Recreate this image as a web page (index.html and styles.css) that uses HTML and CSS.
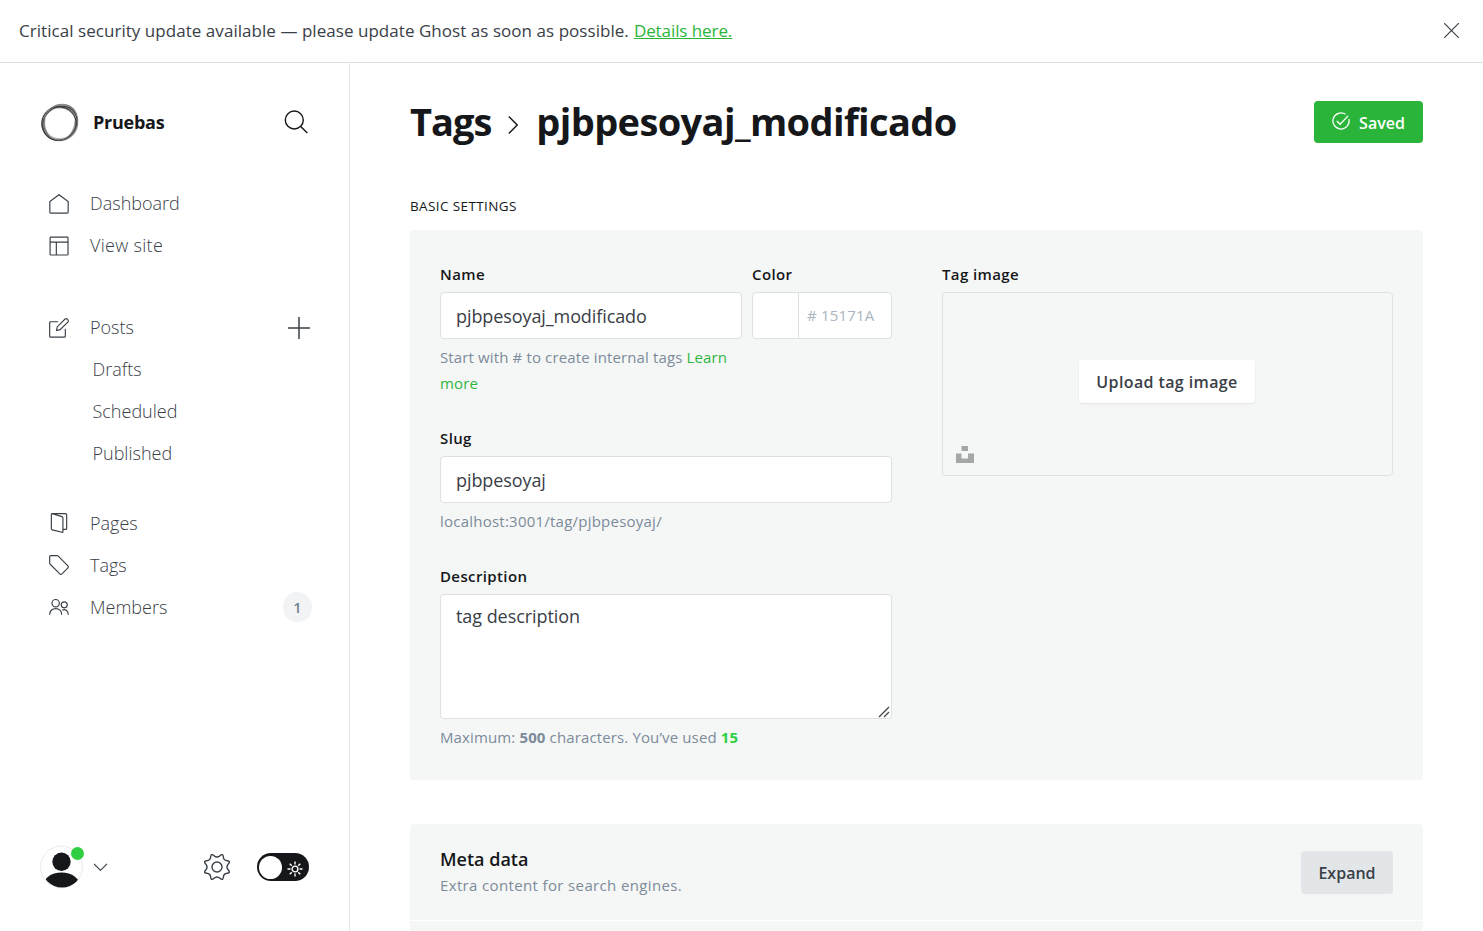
FILE: index.html
```html
<!DOCTYPE html>
<html lang="en">
<head>
<meta charset="utf-8">
<title>Tags - Pruebas</title>
<link rel="stylesheet" href="styles.css">
</head>
<body>
<div class="app">
  <div class="banner">
    <p class="banner-text"><span class="banner-copy">Critical security update available — please update Ghost as soon as possible.</span><a class="banner-link">Details here.</a></p>
    <svg class="close" width="16" height="16" viewBox="0 0 16 16"><path d="M.2.2l14.600 14.600M14.800.2L.2 14.800"/></svg>
  </div>
  <div class="body">
    <aside class="sidebar">
      <header class="site">
        <svg class="site-logo" width="40" height="40" viewBox="0 0 40 40">
          <ellipse cx="19.700" cy="20.300" rx="17" ry="16.400" stroke="#777" stroke-width="3.200" opacity=".5"/>
          <path d="M14.500 3.200C23-1 34 1.500 37.200 12.500L35 13C31 6.500 24 4.200 14.500 5.200zM36.500 13c4 10-1.500 20.500-12 23.500 6-4.500 9.500-11 10-18zM3 15.500C.5 25 5 33 13.500 36.500 7 31 4 24 5.500 15z" fill="#777" opacity=".75"/>
          <ellipse cx="19" cy="20.600" rx="17.200" ry="16.800" stroke="#2c2c2c" stroke-width="1"/>
          <ellipse cx="19.900" cy="20.200" rx="18.200" ry="15.900" transform="rotate(-42 19.900 20.200)" stroke="#3a3a3a" stroke-width="1"/>
          <ellipse cx="20.700" cy="19.100" rx="18.300" ry="16.600" transform="rotate(-60 20.700 19.100)" stroke="#777" stroke-width=".9"/>
        </svg>
        <span class="site-name">Pruebas</span>
        <svg class="search" width="24" height="24" viewBox="0 0 24 24"><circle cx="10.300" cy="10" r="9"/><path d="M16.700 16.400l6.600 6.600"/></svg>
      </header>
      <nav class="nav">
        <ul class="group">
          <li class="item"><svg class="icon" viewBox="0 0 24 24"><path d="M1 9v12.500q0 1.500 1.500 1.500h19q1.500 0 1.500-1.500V9L12 .8z"/></svg><span>Dashboard</span></li>
          <li class="item"><svg class="icon" viewBox="0 0 24 24"><rect x="1.300" y="1.300" width="21.500" height="21.500" rx="1"/><path d="M1.300 7.400h21.500M8.800 7.400v15.400"/></svg><span class="view-site">View site</span></li>
        </ul>
        <ul class="group">
          <li class="item"><svg class="icon" viewBox="0 0 24 24"><path d="M11 4.500H2q-1.200 0-1.200 1.200v16.100q0 1.200 1.200 1.200h16.400q1.200 0 1.200-1.200V13M9 15l.8-4.300L19.300 1.200q1.500-1 3 .4t.5 3L13.300 14z"/></svg><span>Posts</span>
            <svg class="plus" width="22" height="22" viewBox="0 0 22 22"><path d="M11 0v22M0 11h22"/></svg></li>
          <li class="item sub"><span>Drafts</span></li>
          <li class="item sub"><span>Scheduled</span></li>
          <li class="item sub"><span>Published</span></li>
        </ul>
        <ul class="group group-last">
          <li class="item"><svg class="icon" viewBox="0 0 24 24"><path d="M4 .8l11.500 3.500q1.200.4 1.200 1.600v16.300q0 1.200-1.200.9L4 20.300q-1.200-.4-1.200-1.600V1.700Q2.800.8 4 .8h16q1.200 0 1.200 1.200v16.500q0 1.200-1.200 1.200h-3.200"/></svg><span>Pages</span></li>
          <li class="item"><svg class="icon" viewBox="0 0 24 24"><path d="M.8 2v7.700q0 .8.600 1.400L13 22.700q1.300 1 2.500 0l7.200-7.200q1-1.300 0-2.500L11.100 1.400Q10.500.8 9.700.8H2Q.8.800.8 2z"/></svg><span>Tags</span></li>
          <li class="item"><svg class="icon" viewBox="0 0 24 24"><circle cx="8" cy="7.400" r="4.400"/><circle cx="18.300" cy="9.400" r="3.600"/><path d="M.8 21.200c0-4.500 3-7.300 7.200-7.300s7.200 2.800 7.200 7.300M16 15.700c3.800-1.500 7.200.8 7.200 5.500"/></svg><span>Members</span><span class="count">1</span></li>
        </ul>
      </nav>
      <footer class="foot">
        <div class="avatar">
          <svg width="44" height="44" viewBox="0 0 44 44"><defs><clipPath id="face"><circle cx="22" cy="22" r="20.500"/></clipPath></defs><circle cx="21.500" cy="22" r="20.900" fill="#fff" stroke="#e8ebee"/><g clip-path="url(#face)" fill="#15171a"><circle cx="21.500" cy="16.700" r="9.200"/><ellipse cx="21.500" cy="42" rx="19" ry="14.600"/></g></svg>
          <span class="online"></span>
        </div>
        <svg class="caret" width="14" height="8" viewBox="0 0 14 8"><path d="M0 .800L6.500 7.300l6.500-6.500"/></svg>
        <svg class="gear" width="26" height="26" viewBox="-13 -13 26 26"><circle r="5"/><path d="M-3-11.300Q0-8.600 3-11.300Q6-14 6.300-10.300Q6.600-6.600 10.300-6.300Q14-6 11.300-3Q8.600 0 11.300 3Q14 6 10.300 6.300Q6.600 6.600 6.300 10.300Q6 14 3 11.300Q0 8.600-3 11.300Q-6 14-6.300 10.300Q-6.600 6.600-10.300 6.300Q-14 6-11.300 3Q-8.600 0-11.300-3Q-14-6-10.300-6.300Q-6.600-6.600-6.300-10.300Q-6-14-3-11.300z"/></svg>
        <div class="toggle"><span class="knob"></span><svg width="16" height="16" viewBox="0 0 16 16"><circle cx="8" cy="8" r="2.900"/><path d="M8 .5v3M8 12.500v3M.5 8h3M12.500 8h3M2.700 2.700l2.100 2.100M11.200 11.200l2.100 2.100M13.300 2.700l-2.100 2.100M4.800 11.200l-2.100 2.100"/></svg></div>
      </footer>
    </aside>
    <main class="main">
      <header class="heading">
        <h1 class="title"><span class="crumb">Tags</span><svg class="chev" width="10" height="18" viewBox="0 0 10 18"><path d="M.8.500L9.200 9 .8 17.500"/></svg><span class="current">pjbpesoyaj_modificado</span></h1>
        <button class="btn saved"><svg width="18" height="18" viewBox="0 0 18 18"><path d="M16.900 7.200A8.100 8.100 0 1 1 13.600 2.300M4.800 9l3.300 3.300 8-8.400"/></svg><span>Saved</span></button>
      </header>
      <h4 class="section-title">BASIC SETTINGS</h4>
      <section class="card">
        <div class="col">
          <div class="pair">
            <div class="field"><label>Name</label><div class="input"><span>pjbpesoyaj_modificado</span></div>
              <p class="help">Start with # to create internal tags <a class="learn">Learn<br>more</a></p></div>
            <div class="field"><label>Color</label><div class="input color"><span class="swatch"></span><span class="hex"># 15171A</span></div></div>
          </div>
          <div class="field slug"><label>Slug</label><div class="input"><span>pjbpesoyaj</span></div><p class="help url">localhost:3001/tag/pjbpesoyaj/</p></div>
          <div class="field"><label>Description</label>
            <div class="area-wrap"><textarea class="area">tag description</textarea><svg class="grip" width="12" height="12" viewBox="0 0 12 12"><path d="M1 11L11 1M6 11l5-5"/></svg></div>
            <p class="help">Maximum: <b>500</b> characters. You’ve used <b class="used">15</b></p></div>
        </div>
        <div class="col">
          <div class="field"><label>Tag image</label>
            <div class="uploader"><button class="btn upload">Upload tag image</button>
              <svg class="unsplash" width="18" height="17" viewBox="0 0 18 17"><path d="M5.500 0h6.500v5H5.500zM0 7.500h5.500v5H12v-5h6V17H0z"/></svg></div></div>
        </div>
      </section>
      <section class="meta">
        <div class="meta-row"><div><h4 class="meta-title">Meta data</h4><p class="meta-sub">Extra content for search engines.</p></div><button class="btn expand">Expand</button></div>
      </section>
    </main>
  </div>
</div>
</body>
</html>
```
FILE: styles.css
```css
*{box-sizing:border-box}
body{margin:0;background:#fff;color:#15171a;font-family:"Open Sans","Noto Sans",sans-serif;font-size:17px}
p,h1,h4,ul{margin:0;padding:0;font-weight:400}
ul{list-style:none}
svg{display:block;flex:none;fill:none}
span,label{white-space:nowrap}
.app{display:flex;flex-direction:column;height:931px;overflow:hidden}
.banner{display:flex;align-items:center;justify-content:space-between;flex:none;height:63px;padding:0 23px 0 19px;border-bottom:1px solid #dddfe2;color:#394047}
.banner-text{display:flex;gap:5px;line-height:26px}
.banner-copy{letter-spacing:.045px}
.banner-link{letter-spacing:-.08px;color:#2ab53a;text-decoration:underline}
.close{stroke:#394047;stroke-width:1.200}
.body{display:flex;flex:1;min-height:0}
.sidebar{display:flex;flex-direction:column;width:350px;flex:none;border-right:1px solid #e3e5e8;color:#394047}
.site{display:flex;align-items:center;height:40px;margin:40px 41px 0 40px}
.site-name{margin-left:13px;padding-bottom:2px;color:#15171a;font-weight:700;font-size:18px;letter-spacing:-.25px}
.search{margin-left:auto;margin-bottom:3px;stroke:#15171a;stroke-width:1.400}
.nav{display:flex;flex-direction:column;margin-top:40px}
.group{display:flex;flex-direction:column;margin-bottom:40px}
.group-last{margin-top:-13px}
.item{display:flex;align-items:center;height:42px;padding:0 37px 0 49px;font-weight:300;font-size:18px}
.item>span{padding-bottom:2px}
.group-last .item>span{padding-bottom:0}
.view-site{letter-spacing:.3px}
.item.sub{padding-left:92.500px}
.icon{width:20px;height:20px;margin-right:21px;stroke:#394047;stroke-width:1.400}
.plus{margin:0 2px 0 auto;stroke:#394047;stroke-width:1.500}
.count{display:grid;place-items:center;width:29px;height:30px;margin-left:auto;border-radius:15px;background:#f1f3f4;color:#738291;font-size:14.500px;font-weight:600}
.foot{display:flex;align-items:center;height:44px;margin:auto 40px 42px}
.avatar{position:relative}
.online{position:absolute;left:31px;top:2px;width:13px;height:13px;border-radius:50%;background:#30cf43}
.caret{margin:0 0 0 10px;stroke:#394047;stroke-width:1.200}
.gear{margin:0 0 0 95.500px;stroke:#394047;stroke-width:1.400}
.toggle{display:flex;align-items:center;width:52px;height:28px;margin-left:auto;padding:0 6.500px 0 2px;border-radius:14px;background:#15171a}
.toggle svg{margin-left:auto;margin-top:3px;stroke:#fff;stroke-width:1.400}
.knob{width:23px;height:23px;border-radius:50%;background:#fff}
.main{display:flex;flex-direction:column;flex:1;padding:38px 60px 0}
.heading{display:flex;align-items:center;justify-content:space-between;height:42px}
.title{display:flex;align-items:center;padding-bottom:2px;font-weight:700;font-size:38px;line-height:42px}
.crumb{letter-spacing:-1px}
.current{letter-spacing:-.620px}
.chev{margin:8px 18px 0 17px;stroke:#15171a;stroke-width:1.400}
.btn{display:flex;align-items:center;justify-content:center;flex:none;padding:0;border:0;border-radius:4px;font:600 16px "Open Sans",sans-serif;color:#394047}
.saved{width:109px;height:42px;gap:9px;background:#2ab53a;color:#fff}
.saved span{padding-top:1px}
.saved svg{margin-top:-2px;stroke:#fff;stroke-width:1.300}
.section-title{margin-top:51px;height:24px;line-height:24px;font-size:13.500px;font-weight:500;letter-spacing:.380px}
.card{display:grid;grid-template-columns:452px 451px;column-gap:50px;flex:none;height:550px;margin-top:12px;padding:30px;border-radius:4px;background:#f5f7f6}
.pair{display:grid;grid-template-columns:302px 140px;column-gap:10px;height:164px}
.field{display:flex;flex-direction:column}
.field label{height:32px;line-height:28px;font-size:15px;font-weight:600;letter-spacing:.380px}
.input{display:flex;align-items:center;height:47px;padding:0 15px;border:1px solid #dde1e2;border-radius:4px;background:#fff;color:#394047;font-size:18px;letter-spacing:-.090px}
.color{padding:0}
.swatch{width:46px;height:45px;border-right:1px solid #dde1e2}
.hex{margin-left:8px;padding-bottom:1px;color:#abb4be;font-size:15px;font-weight:500;letter-spacing:.180px}
.help{margin-top:5px;line-height:26px;font-size:15px;color:#7c8b9a;white-space:nowrap;letter-spacing:.130px}
.url{letter-spacing:.230px}
.learn{color:#30b53f}
.slug{height:138px}
.area-wrap{position:relative}
.area{display:block;width:452px;height:125px;padding:8px 15px;border:1px solid #dde1e2;border-radius:4px;background:#fff;color:#394047;font:400 18px/27px "Open Sans",sans-serif;letter-spacing:-.060px;resize:none;outline:0}
.grip{position:absolute;right:2px;bottom:1px;stroke:#444;stroke-width:1.300}
.used{color:#30cf43}
.uploader{display:grid;place-items:center;position:relative;height:184px;border:1px solid #dde1e2;border-radius:4px}
.upload{width:176px;height:43px;margin:-5px 2px 0 0;padding-left:1px;background:#fff;box-shadow:0 1px 2px rgba(0,0,0,.08);letter-spacing:.380px}
.unsplash{position:absolute;left:13px;bottom:12px;fill:#a5a7a7}
.meta{display:flex;flex-direction:column;flex:1;margin-top:44px;border-radius:4px 4px 0 0;background:#f5f7f6}
.meta-row{display:flex;align-items:center;justify-content:space-between;height:97px;padding:0 30px;border-bottom:1px solid #fff}
.meta-title{line-height:26px;font-size:18px;font-weight:600}
.meta-sub{line-height:26px;font-size:15px;letter-spacing:.360px;color:#7c8b9a}
.expand{width:92px;height:43px;padding-top:2px;background:#e2e6e9}
```
